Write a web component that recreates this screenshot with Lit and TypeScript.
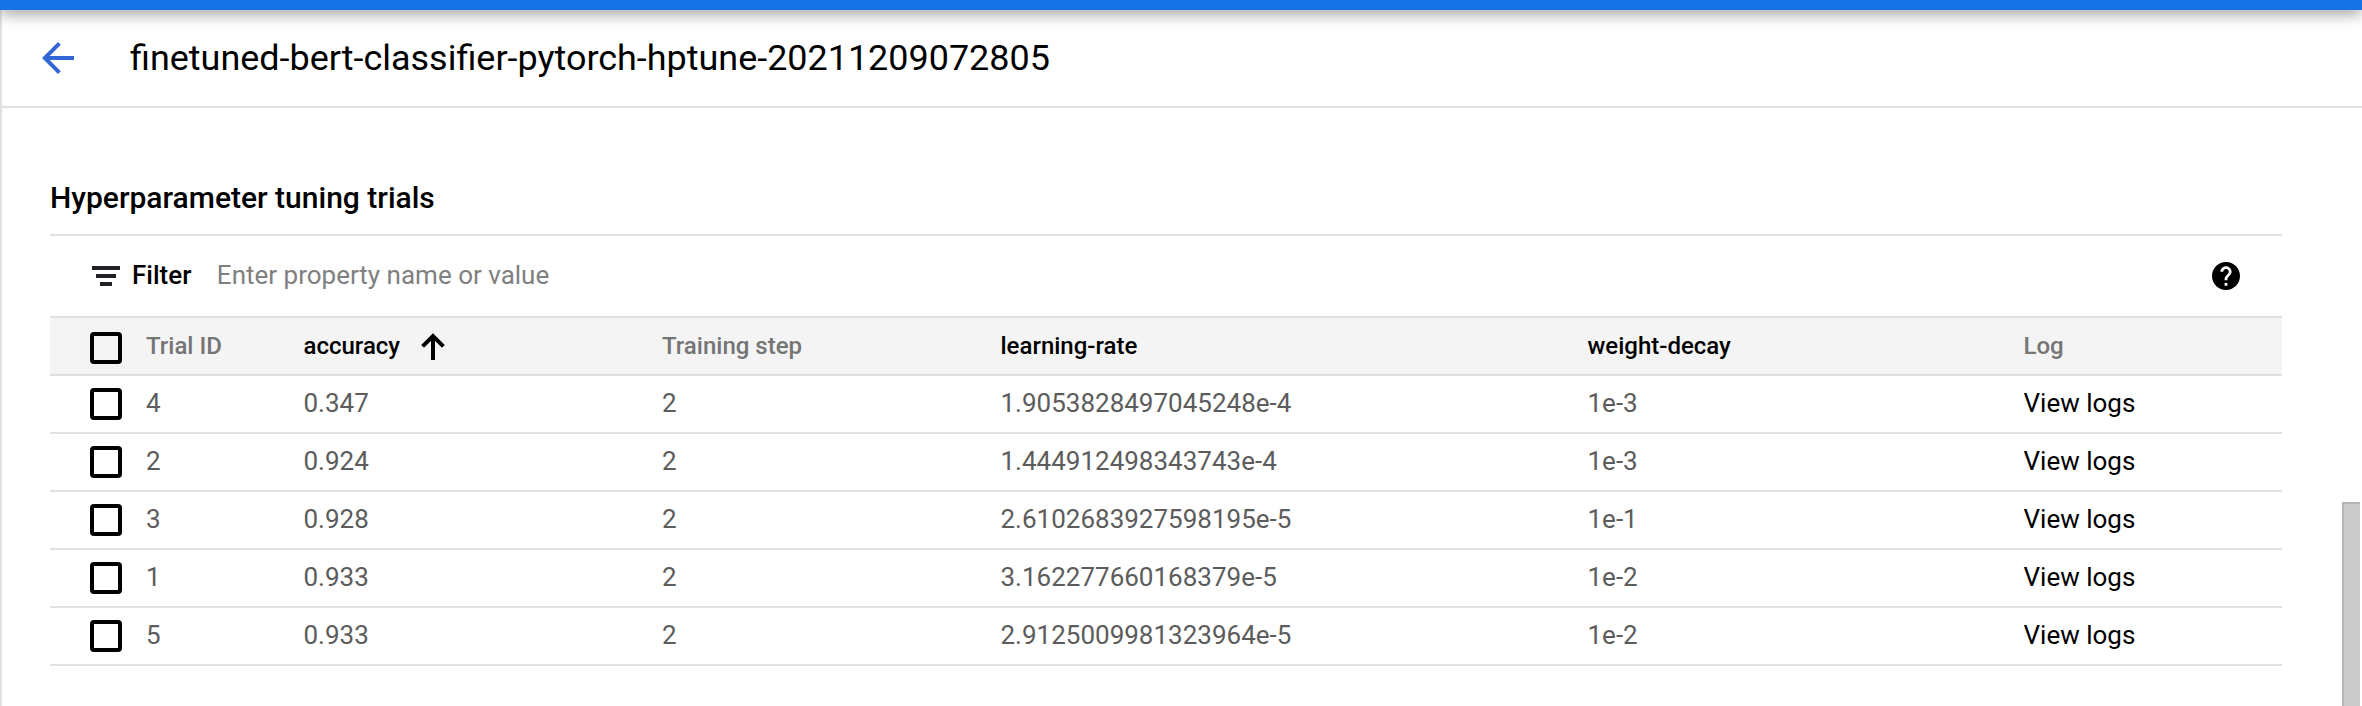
import { LitElement, html, css } from "lit";
import { customElement } from "lit/decorators.js";

interface Trial {
  id: string;
  accuracy: string;
  step: string;
  learningRate: string;
  weightDecay: string;
}

const TRIALS: Trial[] = [
  { id: "4", accuracy: "0.347", step: "2", learningRate: "1.9053828497045248e-4", weightDecay: "1e-3" },
  { id: "2", accuracy: "0.924", step: "2", learningRate: "1.444912498343743e-4", weightDecay: "1e-3" },
  { id: "3", accuracy: "0.928", step: "2", learningRate: "2.6102683927598195e-5", weightDecay: "1e-1" },
  { id: "1", accuracy: "0.933", step: "2", learningRate: "3.162277660168379e-5", weightDecay: "1e-2" },
  { id: "5", accuracy: "0.933", step: "2", learningRate: "2.9125009981323964e-5", weightDecay: "1e-2" },
];

@customElement("trials-table")
export class TrialsTable extends LitElement {
  static styles = css`
    :host { display: block; }
    .row {
      display: grid;
      grid-template-columns: 56px 157.5px 358.5px 338.5px 587px 436px 1fr;
      align-items: center;
      height: 56px;
      padding-left: 40px;
      border-bottom: 2px solid #e0e0e0;
      font-size: 26px;
      line-height: 32px;
      color: #5c5c5c;
    }
    .cell { padding-bottom: 2px; }
    .head {
      background: #f4f4f4;
      font-size: 24px;
      font-weight: 500;
      color: #757575;
    }
    .head .box { margin-top: 4px; }
    .box {
      box-sizing: border-box;
      width: 32px;
      height: 32px;
      border: 4px solid #000;
      border-radius: 4px;
    }
    .dark { color: #000; }
    .sorted { display: flex; align-items: center; gap: 17px; }
    .arrow { display: block; width: 32px; height: 32px; margin-top: 2px; }
  `;

  render() {
    return html`
      <div class="row head">
        <div class="box"></div>
        <div>Trial ID</div>
        <div class="sorted dark">
          <span>accuracy</span>
          <svg class="arrow" viewBox="0 0 32 32">
            <path d="M16 29V5M5.6 15.4L16 5l10.400 10.400" fill="none" stroke="#000" stroke-width="4" />
          </svg>
        </div>
        <div>Training step</div>
        <div class="dark">learning-rate</div>
        <div class="dark">weight-decay</div>
        <div>Log</div>
      </div>
      ${TRIALS.map(
        (t) => html`
          <div class="row">
            <div class="box"></div>
            <div class="cell">${t.id}</div>
            <div class="cell">${t.accuracy}</div>
            <div class="cell">${t.step}</div>
            <div class="cell">${t.learningRate}</div>
            <div class="cell">${t.weightDecay}</div>
            <div class="cell dark">View logs</div>
          </div>
        `
      )}
    `;
  }
}

@customElement("app-root")
export class AppRoot extends LitElement {
  static styles = css`
    :host {
      display: block;
      position: relative;
      box-sizing: border-box;
      height: 706px;
      overflow: hidden;
      background: #fff;
      color: #000;
      font-family: Roboto, sans-serif;
    }
    .topbar {
      position: relative;
      height: 10px;
      background: #1573e6;
      box-shadow: 0 2px 16px rgba(0, 0, 0, 0.55);
    }
    .page {
      box-sizing: border-box;
      height: 696px;
      border-left: 2px solid #e0e0e0;
    }
    .header {
      display: flex;
      align-items: center;
      gap: 48px;
      height: 96px;
      padding-left: 32px;
      border-bottom: 2px solid #e0e0e0;
    }
    .back { display: block; width: 48px; height: 48px; }
    .title { margin: 0; font-size: 35.95px; line-height: 44px; font-weight: 400; }
    .content { padding: 72px 80px 0 48px; }
    .section { margin: 0; padding-bottom: 19px; font-size: 30px; line-height: 35px; font-weight: 500; }
    .filterbar {
      display: flex;
      align-items: center;
      height: 80px;
      padding: 0 42px;
      border-top: 2px solid #e0e0e0;
      border-bottom: 2px solid #e0e0e0;
      font-size: 26px;
      line-height: 32px;
    }
    .lines { display: block; width: 28px; height: 20px; margin-right: 12px; }
    .label { font-weight: 500; margin-right: 25.5px; padding-bottom: 2px; }
    .hint { flex: 1; color: #808080; padding-bottom: 2px; }
    .help { display: block; width: 28px; height: 28px; }
    .scroll {
      position: absolute;
      right: 2px;
      top: 502px;
      bottom: 0;
      box-sizing: border-box;
      width: 18px;
      border-left: 2px solid #b5b5b5;
      border-top: 2px solid #b5b5b5;
      background: #cbcbcb;
    }
  `;

  render() {
    return html`
      <div class="topbar"></div>
      <div class="page">
        <div class="header">
          <svg class="back" viewBox="0 0 24 24">
            <path fill="#3367d6" d="M20 11H7.830l5.590-5.590L12 4l-8 8 8 8 1.410-1.410L7.830 13H20v-2z" />
          </svg>
          <h1 class="title">finetuned-bert-classifier-pytorch-hptune-20211209072805</h1>
        </div>
        <div class="content">
          <h2 class="section">Hyperparameter tuning trials</h2>
          <div class="filterbar">
            <svg class="lines" viewBox="0 0 28 20">
              <path fill="#202124" d="M0 0h28v4H0zM4 8h20v4H4zM8 16h12v4H8z" />
            </svg>
            <span class="label">Filter</span>
            <span class="hint">Enter property name or value</span>
            <svg class="help" viewBox="2 2 20 20">
              <path
                d="M12 2C6.480 2 2 6.480 2 12s4.480 10 10 10 10-4.480 10-10S17.520 2 12 2zm1 17h-2v-2h2v2zm2.070-7.750l-.9.920C13.450 12.900 13 13.500 13 15h-2v-.5c0-1.100.450-2.100 1.170-2.830l1.240-1.260c.370-.360.590-.860.590-1.410 0-1.100-.9-2-2-2s-2 .9-2 2H8c0-2.210 1.790-4 4-4s4 1.790 4 4c0 .880-.360 1.680-.930 2.250z"
              />
            </svg>
          </div>
          <trials-table></trials-table>
        </div>
      </div>
      <div class="scroll"></div>
    `;
  }
}
